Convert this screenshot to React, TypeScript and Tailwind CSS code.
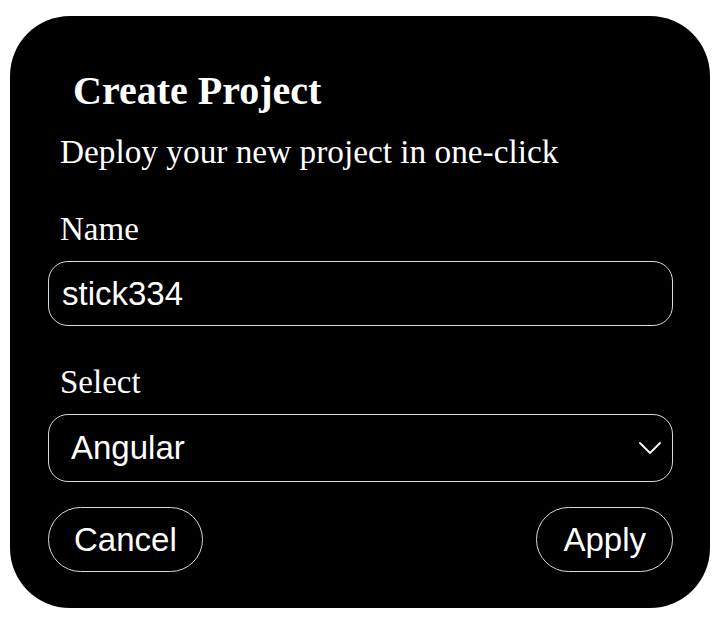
import React, { useState } from "react";

const serif = { fontFamily: '"Liberation Serif", "Times New Roman", serif' };

export default function App(): React.JSX.Element {
    const [name, setName] = useState("stick334");
    const [framework, setFramework] = useState("Angular");

    return (
        <div className="w-[720px] h-[622px] bg-white pt-[16px] pl-[10px]">
            {/* Card */}
            <div className="w-[700px] h-[592px] bg-black rounded-[60px] pl-[38px] pr-[37px] text-white flex flex-col">
                <h2
                    style={serif}
                    className="mt-[51px] ml-[25px] text-[40px] leading-[48px] font-bold"
                >
                    Create Project
                </h2>
                <p style={serif} className="mt-[17px] ml-[12px] text-[33.3px] leading-[40px]">
                    Deploy your new project in one-click
                </p>

                <label style={serif} className="mt-[37px] ml-[12px] text-[33px] leading-[40px]">
                    Name
                </label>
                <input
                    value={name}
                    onChange={(e) => setName(e.target.value)}
                    className="mt-[12px] h-[65px] w-full rounded-[20px] border border-[#d9d9d9] bg-black px-[13px] text-[33px] text-white outline-none font-['Liberation_Sans',Arial,sans-serif]"
                />

                <label style={serif} className="mt-[36px] ml-[12px] text-[33px] leading-[40px]">
                    Select
                </label>
                <div className="mt-[12px] h-[68px] w-full rounded-[20px] border border-[#d9d9d9] flex items-center">
                    <select
                        value={framework}
                        onChange={(e) => setFramework(e.target.value)}
                        className="flex-1 h-full appearance-none bg-transparent pl-[22px] text-[33px] text-white outline-none font-['Liberation_Sans',Arial,sans-serif]"
                    >
                        <option className="bg-black">Angular</option>
                        <option className="bg-black">React</option>
                        <option className="bg-black">Vue</option>
                        <option className="bg-black">Svelte</option>
                    </select>
                    <svg
                        width="22"
                        height="12"
                        viewBox="0 0 22 12"
                        fill="none"
                        stroke="white"
                        strokeWidth="1.8"
                        strokeLinecap="round"
                        strokeLinejoin="round"
                        className="mr-[11px] pointer-events-none"
                    >
                        <path d="M1 1l10 10L21 1" />
                    </svg>
                </div>

                {/* Actions */}
                <div className="mt-[25px] flex items-center justify-between font-['Liberation_Sans',Arial,sans-serif]">
                    <button className="h-[65px] px-[25px] rounded-full border border-[#d9d9d9] text-[33px] text-white">
                        Cancel
                    </button>
                    <button className="h-[65px] px-[26px] rounded-full border border-[#d9d9d9] text-[33px] text-white">
                        Apply
                    </button>
                </div>
            </div>
        </div>
    );
}
